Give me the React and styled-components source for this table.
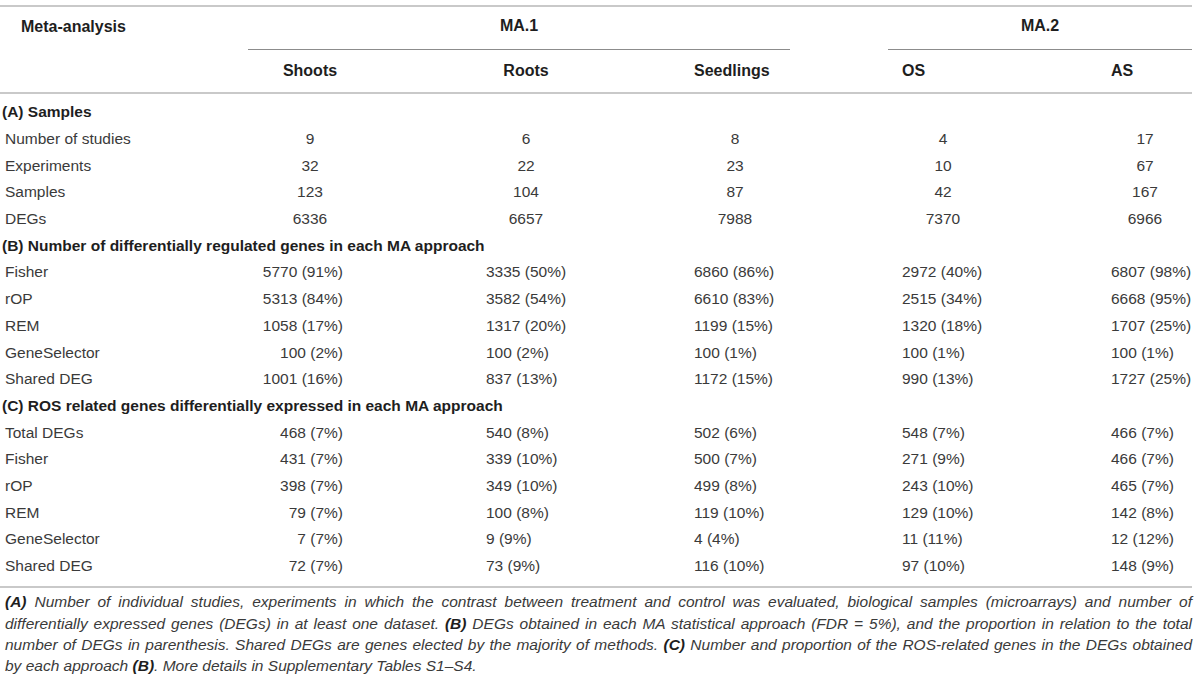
import React from "react";
import styled, { createGlobalStyle } from "styled-components";

const GlobalStyle = createGlobalStyle`
  body {
    margin: 0;
    background: #ffffff;
    font-family: "Liberation Sans", Arial, sans-serif;
    color: #3a3a3a;
  }
`;

const COLUMNS = "248px 124px 308px 110px 98px 110px 100px 94px";

const Page = styled.div`
  width: 1192px;
  padding-top: 5px;
`;

const Table = styled.div`
  border-top: 2px solid #c9c9c9;
`;

const Row = styled.div`
  display: grid;
  grid-template-columns: ${COLUMNS};
  align-items: center;
  height: ${(p) => p.$h || 26.7}px;
  box-sizing: border-box;
  border-bottom: ${(p) => (p.$rule ? "2px solid #c9c9c9" : "none")};
`;

const Body = styled.div`
  padding: 5px 0 7px;
  border-bottom: 2px solid #c9c9c9;
`;

const HeadCell = styled.div`
  grid-column: ${(p) => p.$col};
  font-weight: bold;
  font-size: 16px;
  color: #1e1e1e;
  white-space: nowrap;
  text-align: ${(p) => p.$align || "center"};
  padding-left: ${(p) => p.$pl || 0}px;
  padding-bottom: ${(p) => p.$pb || 0}px;
`;

const GroupCell = styled(HeadCell)`
  grid-row: 1;
  align-self: stretch;
  display: flex;
  align-items: center;
  justify-content: center;
  padding-bottom: 4px;
  border-bottom: 1px solid #8c8c8c;
`;

const Section = styled.div`
  grid-column: 1 / -1;
  font-weight: bold;
  font-size: 15.5px;
  color: #1e1e1e;
  padding-left: 2px;
  white-space: nowrap;
`;

const Label = styled.div`
  grid-column: 1;
  padding-left: 5px;
  font-size: 15.5px;
  white-space: nowrap;
`;

const Value = styled.div`
  grid-column: ${(p) => p.$col};
  font-size: 15.5px;
  white-space: nowrap;
  text-align: ${(p) => p.$align};
  padding-left: ${(p) => (p.$align === "left" ? p.$pad : 0)}px;
  padding-right: ${(p) => (p.$align === "right" ? p.$pad : 0)}px;
`;

const Caption = styled.div`
  margin-top: 3px;
  padding-left: 5px;
  font-style: italic;
  font-size: 15.5px;
  line-height: 21.3px;
  color: #3a3a3a;
`;

const CapLine = styled.div`
  text-align: justify;
  text-align-last: ${(p) => (p.$last ? "left" : "justify")};
  white-space: nowrap;
`;

const B = styled.b`
  font-weight: bold;
  color: #1e1e1e;
`;

// grid column, alignment used by sections B and C, and its inset
const cols = [
  { col: 2, flow: "right", pad: 29 },
  { col: 3, flow: "left", pad: 114 },
  { col: 4, flow: "left", pad: 14 },
  { col: 6, flow: "left", pad: 14 },
  { col: 8, flow: "left", pad: 13 },
];

const sections = [
  {
    title: "(A) Samples",
    centered: true,
    rows: [
      ["Number of studies", "9", "6", "8", "4", "17"],
      ["Experiments", "32", "22", "23", "10", "67"],
      ["Samples", "123", "104", "87", "42", "167"],
      ["DEGs", "6336", "6657", "7988", "7370", "6966"],
    ],
  },
  {
    title: "(B) Number of differentially regulated genes in each MA approach",
    rows: [
      ["Fisher", "5770 (91%)", "3335 (50%)", "6860 (86%)", "2972 (40%)", "6807 (98%)"],
      ["rOP", "5313 (84%)", "3582 (54%)", "6610 (83%)", "2515 (34%)", "6668 (95%)"],
      ["REM", "1058 (17%)", "1317 (20%)", "1199 (15%)", "1320 (18%)", "1707 (25%)"],
      ["GeneSelector", "100 (2%)", "100 (2%)", "100 (1%)", "100 (1%)", "100 (1%)"],
      ["Shared DEG", "1001 (16%)", "837 (13%)", "1172 (15%)", "990 (13%)", "1727 (25%)"],
    ],
  },
  {
    title: "(C) ROS related genes differentially expressed in each MA approach",
    rows: [
      ["Total DEGs", "468 (7%)", "540 (8%)", "502 (6%)", "548 (7%)", "466 (7%)"],
      ["Fisher", "431 (7%)", "339 (10%)", "500 (7%)", "271 (9%)", "466 (7%)"],
      ["rOP", "398 (7%)", "349 (10%)", "499 (8%)", "243 (10%)", "465 (7%)"],
      ["REM", "79 (7%)", "100 (8%)", "119 (10%)", "129 (10%)", "142 (8%)"],
      ["GeneSelector", "7 (7%)", "9 (9%)", "4 (4%)", "11 (11%)", "12 (12%)"],
      ["Shared DEG", "72 (7%)", "73 (9%)", "116 (10%)", "97 (10%)", "148 (9%)"],
    ],
  },
];

const App = () => {
  return (
    <Page>
      <GlobalStyle />
      <Table>
        <Row $h={43}>
          <HeadCell $col={1} $align="left" $pl={21} $pb={4}>
            Meta-analysis
          </HeadCell>
          <GroupCell $col="2 / 5">MA.1</GroupCell>
          <GroupCell $col="6 / 9">MA.2</GroupCell>
        </Row>
        <Row $h={44} $rule>
          <HeadCell $col={2}>Shoots</HeadCell>
          <HeadCell $col={3}>Roots</HeadCell>
          <HeadCell $col={4} $align="left" $pl={14}>
            Seedlings
          </HeadCell>
          <HeadCell $col={6} $align="left" $pl={14}>
            OS
          </HeadCell>
          <HeadCell $col={8} $align="left" $pl={13}>
            AS
          </HeadCell>
        </Row>
        <Body>
          {sections.map((s) => (
            <React.Fragment key={s.title}>
              <Row>
                <Section>{s.title}</Section>
              </Row>
              {s.rows.map((r, i) => (
                <Row key={i}>
                  <Label>{r[0]}</Label>
                  {r.slice(1).map((v, j) => (
                    <Value
                      key={j}
                      $col={cols[j].col}
                      $align={s.centered ? "center" : cols[j].flow}
                      $pad={cols[j].pad}
                    >
                      {v}
                    </Value>
                  ))}
                </Row>
              ))}
            </React.Fragment>
          ))}
        </Body>
      </Table>
      <Caption>
        <CapLine>
          <B>(A)</B> Number of individual studies, experiments in which the contrast between treatment and control was
          evaluated, biological samples (microarrays) and number of
        </CapLine>
        <CapLine>
          differentially expressed genes (DEGs) in at least one dataset. <B>(B)</B> DEGs obtained in each MA statistical
          approach (FDR = 5%), and the proportion in relation to the total
        </CapLine>
        <CapLine>
          number of DEGs in parenthesis. Shared DEGs are genes elected by the majority of methods. <B>(C)</B> Number and
          proportion of the ROS-related genes in the DEGs obtained
        </CapLine>
        <CapLine $last>
          by each approach <B>(B)</B>. More details in Supplementary Tables S1–S4.
        </CapLine>
      </Caption>
    </Page>
  );
};

export default App;
